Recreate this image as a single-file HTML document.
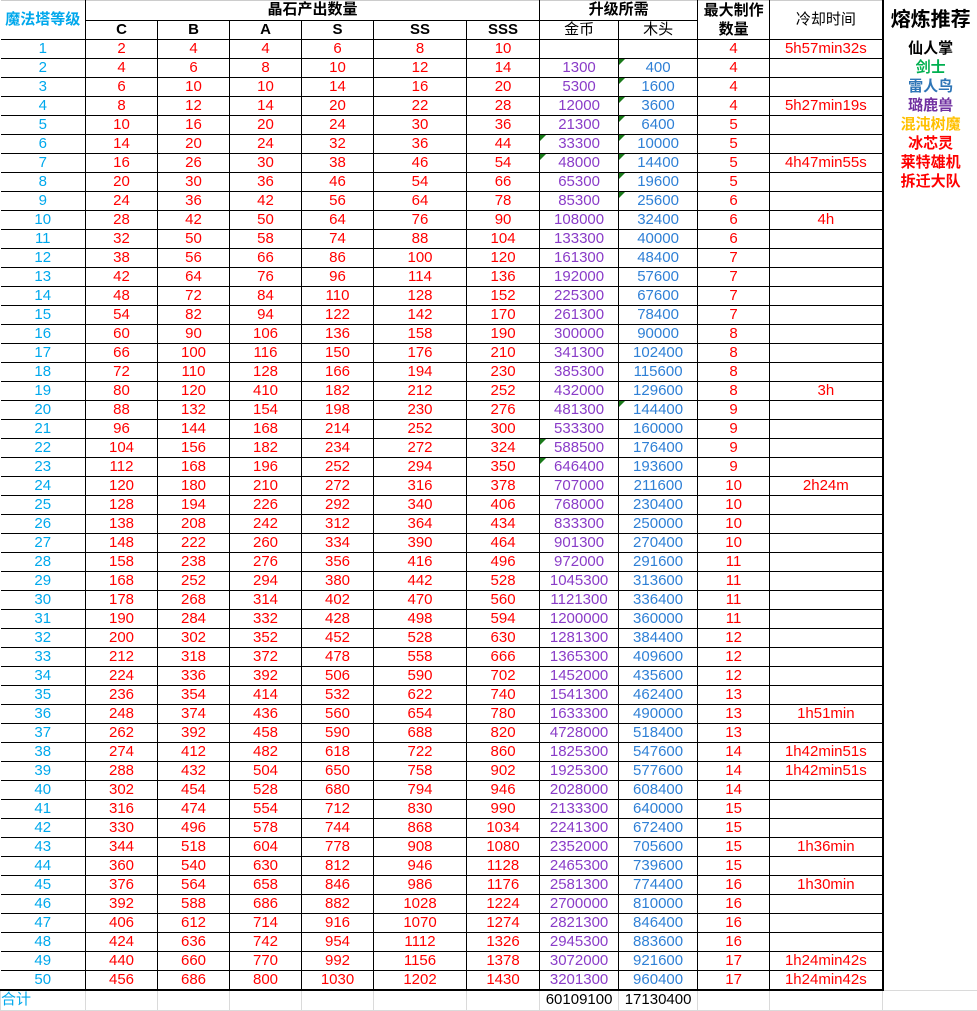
<!DOCTYPE html>
<html><head><meta charset="utf-8"><style>
body{margin:0;background:#fff;width:977px;height:1009px;overflow:hidden;font-family:"Liberation Sans","Noto Sans CJK SC",sans-serif;}
table{border-collapse:collapse;table-layout:fixed;width:977px;position:absolute;left:0;top:0}
td{padding:0;height:18px;line-height:18px;text-align:center;font-size:15px;border:1px solid #000;overflow:hidden;white-space:nowrap;color:#f00;position:relative}
tr{height:19px}
td:first-child{border-left:none;color:#00a8ec}
td.h{color:#000;font-size:15px}
td.hb{font-weight:bold;color:#000;font-size:15px}
td:nth-child(8){color:#8a3cc8}
td:nth-child(9){color:#2f80d6}
td.x{border-right:2px solid #000}
td.rec{border:none;font-weight:bold;font-size:15px}
tr.last td{border-bottom:2px solid #000}
tr.tot td{border:1px solid #dadada;color:#000}
tr.tot td:first-child{color:#00a8ec;text-align:left;font-size:15px}
.t:before{content:"";position:absolute;left:0;top:0;border-top:6px solid #1a7a1a;border-right:6px solid transparent}
</style></head><body>
<table>
<colgroup><col style="width:85px"><col style="width:72px"><col style="width:72px"><col style="width:72px"><col style="width:72px"><col style="width:93px"><col style="width:73px"><col style="width:79px"><col style="width:79px"><col style="width:72px"><col style="width:113px"><col style="width:95px"></colgroup>
<tr><td rowspan="2" style="font-weight:bold;border-top-color:#ccc">魔法塔等级</td><td colspan="6" class="hb" style="border-top-color:#ccc">晶石产出数量</td><td colspan="2" class="hb" style="border-top-color:#ccc">升级所需</td><td rowspan="2" class="hb" style="line-height:19px;white-space:normal;border-top-color:#ccc">最大制作<br>数量</td><td rowspan="2" class="h x" style="border-top-color:#ccc">冷却时间</td><td rowspan="2" class="rec" style="color:#000;font-size:20px">熔炼推荐</td></tr>
<tr><td class="hb">C</td><td class="hb">B</td><td class="hb">A</td><td class="hb">S</td><td class="hb">SS</td><td class="hb">SSS</td><td class="h" style="color:#000">金币</td><td class="h" style="color:#000">木头</td></tr>
<tr><td>1</td><td>2</td><td>4</td><td>4</td><td>6</td><td>8</td><td>10</td><td></td><td></td><td>4</td><td class="x">5h57min32s</td><td class="rec" style="color:#000">仙人掌</td></tr>
<tr><td>2</td><td>4</td><td>6</td><td>8</td><td>10</td><td>12</td><td>14</td><td>1300</td><td class="t">400</td><td>4</td><td class="x"></td><td class="rec" style="color:#00b050">剑士</td></tr>
<tr><td>3</td><td>6</td><td>10</td><td>10</td><td>14</td><td>16</td><td>20</td><td>5300</td><td class="t">1600</td><td>4</td><td class="x"></td><td class="rec" style="color:#2e75b6">雷人鸟</td></tr>
<tr><td>4</td><td>8</td><td>12</td><td>14</td><td>20</td><td>22</td><td>28</td><td>12000</td><td class="t">3600</td><td>4</td><td class="x">5h27min19s</td><td class="rec" style="color:#7030a0">璐鹿兽</td></tr>
<tr><td>5</td><td>10</td><td>16</td><td>20</td><td>24</td><td>30</td><td>36</td><td>21300</td><td class="t">6400</td><td>5</td><td class="x"></td><td class="rec" style="color:#ffc000">混沌树魔</td></tr>
<tr><td>6</td><td>14</td><td>20</td><td>24</td><td>32</td><td>36</td><td>44</td><td class="t">33300</td><td class="t">10000</td><td>5</td><td class="x"></td><td class="rec" style="color:#f00">冰芯灵</td></tr>
<tr><td>7</td><td>16</td><td>26</td><td>30</td><td>38</td><td>46</td><td>54</td><td class="t">48000</td><td class="t">14400</td><td>5</td><td class="x">4h47min55s</td><td class="rec" style="color:#f00">莱特雄机</td></tr>
<tr><td>8</td><td>20</td><td>30</td><td>36</td><td>46</td><td>54</td><td>66</td><td>65300</td><td class="t">19600</td><td>5</td><td class="x"></td><td class="rec" style="color:#f00">拆迁大队</td></tr>
<tr><td>9</td><td>24</td><td>36</td><td>42</td><td>56</td><td>64</td><td>78</td><td>85300</td><td class="t">25600</td><td>6</td><td class="x"></td><td class="rec"></td></tr>
<tr><td>10</td><td>28</td><td>42</td><td>50</td><td>64</td><td>76</td><td>90</td><td>108000</td><td>32400</td><td>6</td><td class="x">4h</td><td class="rec"></td></tr>
<tr><td>11</td><td>32</td><td>50</td><td>58</td><td>74</td><td>88</td><td>104</td><td>133300</td><td>40000</td><td>6</td><td class="x"></td><td class="rec"></td></tr>
<tr><td>12</td><td>38</td><td>56</td><td>66</td><td>86</td><td>100</td><td>120</td><td>161300</td><td>48400</td><td>7</td><td class="x"></td><td class="rec"></td></tr>
<tr><td>13</td><td>42</td><td>64</td><td>76</td><td>96</td><td>114</td><td>136</td><td>192000</td><td>57600</td><td>7</td><td class="x"></td><td class="rec"></td></tr>
<tr><td>14</td><td>48</td><td>72</td><td>84</td><td>110</td><td>128</td><td>152</td><td>225300</td><td>67600</td><td>7</td><td class="x"></td><td class="rec"></td></tr>
<tr><td>15</td><td>54</td><td>82</td><td>94</td><td>122</td><td>142</td><td>170</td><td>261300</td><td>78400</td><td>7</td><td class="x"></td><td class="rec"></td></tr>
<tr><td>16</td><td>60</td><td>90</td><td>106</td><td>136</td><td>158</td><td>190</td><td>300000</td><td>90000</td><td>8</td><td class="x"></td><td class="rec"></td></tr>
<tr><td>17</td><td>66</td><td>100</td><td>116</td><td>150</td><td>176</td><td>210</td><td>341300</td><td>102400</td><td>8</td><td class="x"></td><td class="rec"></td></tr>
<tr><td>18</td><td>72</td><td>110</td><td>128</td><td>166</td><td>194</td><td>230</td><td>385300</td><td>115600</td><td>8</td><td class="x"></td><td class="rec"></td></tr>
<tr><td>19</td><td>80</td><td>120</td><td>410</td><td>182</td><td>212</td><td>252</td><td>432000</td><td>129600</td><td>8</td><td class="x">3h</td><td class="rec"></td></tr>
<tr><td>20</td><td>88</td><td>132</td><td>154</td><td>198</td><td>230</td><td>276</td><td>481300</td><td class="t">144400</td><td>9</td><td class="x"></td><td class="rec"></td></tr>
<tr><td>21</td><td>96</td><td>144</td><td>168</td><td>214</td><td>252</td><td>300</td><td>533300</td><td>160000</td><td>9</td><td class="x"></td><td class="rec"></td></tr>
<tr><td>22</td><td>104</td><td>156</td><td>182</td><td>234</td><td>272</td><td>324</td><td class="t">588500</td><td>176400</td><td>9</td><td class="x"></td><td class="rec"></td></tr>
<tr><td>23</td><td>112</td><td>168</td><td>196</td><td>252</td><td>294</td><td>350</td><td class="t">646400</td><td>193600</td><td>9</td><td class="x"></td><td class="rec"></td></tr>
<tr><td>24</td><td>120</td><td>180</td><td>210</td><td>272</td><td>316</td><td>378</td><td>707000</td><td>211600</td><td>10</td><td class="x">2h24m</td><td class="rec"></td></tr>
<tr><td>25</td><td>128</td><td>194</td><td>226</td><td>292</td><td>340</td><td>406</td><td>768000</td><td>230400</td><td>10</td><td class="x"></td><td class="rec"></td></tr>
<tr><td>26</td><td>138</td><td>208</td><td>242</td><td>312</td><td>364</td><td>434</td><td>833300</td><td>250000</td><td>10</td><td class="x"></td><td class="rec"></td></tr>
<tr><td>27</td><td>148</td><td>222</td><td>260</td><td>334</td><td>390</td><td>464</td><td>901300</td><td>270400</td><td>10</td><td class="x"></td><td class="rec"></td></tr>
<tr><td>28</td><td>158</td><td>238</td><td>276</td><td>356</td><td>416</td><td>496</td><td>972000</td><td>291600</td><td>11</td><td class="x"></td><td class="rec"></td></tr>
<tr><td>29</td><td>168</td><td>252</td><td>294</td><td>380</td><td>442</td><td>528</td><td>1045300</td><td>313600</td><td>11</td><td class="x"></td><td class="rec"></td></tr>
<tr><td>30</td><td>178</td><td>268</td><td>314</td><td>402</td><td>470</td><td>560</td><td>1121300</td><td>336400</td><td>11</td><td class="x"></td><td class="rec"></td></tr>
<tr><td>31</td><td>190</td><td>284</td><td>332</td><td>428</td><td>498</td><td>594</td><td>1200000</td><td>360000</td><td>11</td><td class="x"></td><td class="rec"></td></tr>
<tr><td>32</td><td>200</td><td>302</td><td>352</td><td>452</td><td>528</td><td>630</td><td>1281300</td><td>384400</td><td>12</td><td class="x"></td><td class="rec"></td></tr>
<tr><td>33</td><td>212</td><td>318</td><td>372</td><td>478</td><td>558</td><td>666</td><td>1365300</td><td>409600</td><td>12</td><td class="x"></td><td class="rec"></td></tr>
<tr><td>34</td><td>224</td><td>336</td><td>392</td><td>506</td><td>590</td><td>702</td><td>1452000</td><td>435600</td><td>12</td><td class="x"></td><td class="rec"></td></tr>
<tr><td>35</td><td>236</td><td>354</td><td>414</td><td>532</td><td>622</td><td>740</td><td>1541300</td><td>462400</td><td>13</td><td class="x"></td><td class="rec"></td></tr>
<tr><td>36</td><td>248</td><td>374</td><td>436</td><td>560</td><td>654</td><td>780</td><td>1633300</td><td>490000</td><td>13</td><td class="x">1h51min</td><td class="rec"></td></tr>
<tr><td>37</td><td>262</td><td>392</td><td>458</td><td>590</td><td>688</td><td>820</td><td>4728000</td><td>518400</td><td>13</td><td class="x"></td><td class="rec"></td></tr>
<tr><td>38</td><td>274</td><td>412</td><td>482</td><td>618</td><td>722</td><td>860</td><td>1825300</td><td>547600</td><td>14</td><td class="x">1h42min51s</td><td class="rec"></td></tr>
<tr><td>39</td><td>288</td><td>432</td><td>504</td><td>650</td><td>758</td><td>902</td><td>1925300</td><td>577600</td><td>14</td><td class="x">1h42min51s</td><td class="rec"></td></tr>
<tr><td>40</td><td>302</td><td>454</td><td>528</td><td>680</td><td>794</td><td>946</td><td>2028000</td><td>608400</td><td>14</td><td class="x"></td><td class="rec"></td></tr>
<tr><td>41</td><td>316</td><td>474</td><td>554</td><td>712</td><td>830</td><td>990</td><td>2133300</td><td>640000</td><td>15</td><td class="x"></td><td class="rec"></td></tr>
<tr><td>42</td><td>330</td><td>496</td><td>578</td><td>744</td><td>868</td><td>1034</td><td>2241300</td><td>672400</td><td>15</td><td class="x"></td><td class="rec"></td></tr>
<tr><td>43</td><td>344</td><td>518</td><td>604</td><td>778</td><td>908</td><td>1080</td><td>2352000</td><td>705600</td><td>15</td><td class="x">1h36min</td><td class="rec"></td></tr>
<tr><td>44</td><td>360</td><td>540</td><td>630</td><td>812</td><td>946</td><td>1128</td><td>2465300</td><td>739600</td><td>15</td><td class="x"></td><td class="rec"></td></tr>
<tr><td>45</td><td>376</td><td>564</td><td>658</td><td>846</td><td>986</td><td>1176</td><td>2581300</td><td>774400</td><td>16</td><td class="x">1h30min</td><td class="rec"></td></tr>
<tr><td>46</td><td>392</td><td>588</td><td>686</td><td>882</td><td>1028</td><td>1224</td><td>2700000</td><td>810000</td><td>16</td><td class="x"></td><td class="rec"></td></tr>
<tr><td>47</td><td>406</td><td>612</td><td>714</td><td>916</td><td>1070</td><td>1274</td><td>2821300</td><td>846400</td><td>16</td><td class="x"></td><td class="rec"></td></tr>
<tr><td>48</td><td>424</td><td>636</td><td>742</td><td>954</td><td>1112</td><td>1326</td><td>2945300</td><td>883600</td><td>16</td><td class="x"></td><td class="rec"></td></tr>
<tr><td>49</td><td>440</td><td>660</td><td>770</td><td>992</td><td>1156</td><td>1378</td><td>3072000</td><td>921600</td><td>17</td><td class="x">1h24min42s</td><td class="rec"></td></tr>
<tr class="last"><td>50</td><td>456</td><td>686</td><td>800</td><td>1030</td><td>1202</td><td>1430</td><td>3201300</td><td>960400</td><td>17</td><td class="x">1h24min42s</td><td class="rec" style="border-bottom:1px solid #dadada"></td></tr>
<tr class="tot" style="height:20px"><td>合计</td><td></td><td></td><td></td><td></td><td></td><td></td><td style="color:#000">60109100</td><td style="color:#000">17130400</td><td></td><td></td><td></td></tr>
</table>
</body></html>
